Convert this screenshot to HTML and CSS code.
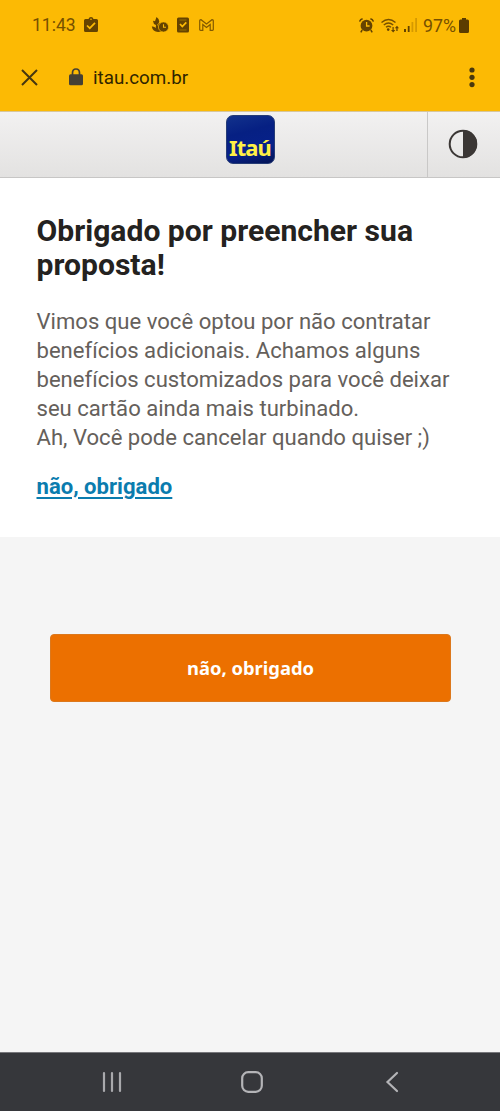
FILE: index.html
```html
<!DOCTYPE html>
<html lang="pt-BR">
<head>
<meta charset="utf-8">
<title>Itaú</title>
<link rel="stylesheet" href="styles.css">
</head>
<body>
<div class="screen">
  <div class="browser">
    <div class="status">
      <span class="clock">11:43</span>
      <svg class="ic-task" width="14" height="16" viewBox="0 0 14 16"><path d="M1.5 2H4.5Q5 0 7 0Q9 0 9.5 2H12.5Q14 2 14 3.500V13.500Q14 15 12.500 15H1.500Q0 15 0 13.500V3.500Q0 2 1.500 2Z" fill="#654300"/><path d="M3 8.500L5.800 11.200L11 5.800" fill="none" stroke="#fcba04" stroke-width="1.700"/><circle cx="7" cy="2.300" r=".8" fill="#fcba04"/></svg>
      <svg class="ic-plant" width="18" height="16" viewBox="0 0 18 16"><path d="M5.500 0Q9 2.500 8 5.500Q7.400 7 6.200 7.700V9Q7 6.800 9.500 5.800L10.500 14.500Q2 16.500 .8 9.500Q3.300 9 4.700 11L5 8Q1.800 7 2.200 3.800L4 4.300Z" fill="#654300"/><circle cx="12.500" cy="10" r="5.100" fill="#654300" stroke="#fcba04" stroke-width=".7"/><path d="M12.500 7.300V10.300H15" fill="none" stroke="#fcba04" stroke-width="1.100"/></svg>
      <svg class="ic-card" width="12" height="16" viewBox="0 0 12 16"><rect y=".5" width="12" height="15" rx="1.500" fill="#654300"/><path d="M2.500 3H9.500M2.500 13H9.500" stroke="#987000" stroke-width="1"/><path d="M3 7L5.300 9.500L9.300 5.300" fill="none" stroke="#fcba04" stroke-width="1.800"/></svg>
      <svg class="ic-mail" width="15" height="12" viewBox="0 0 15 12"><path d="M.7 10.600V2Q.7.600 2 .700L7.500 5L13 .700Q14.300.600 14.300 2V10.600Q14.300 11.300 13.500 11.300H11.200V5.500L7.500 8.400L3.800 5.500V11.300H1.500Q.7 11.300 .7 10.600Z" fill="none" stroke="#835a00" stroke-width="1.200"/></svg>
      <svg class="ic-alarm" width="15" height="15" viewBox="0 0 15 15"><path d="M.6 3.600Q1.300 1.500 3.600.800M14.400 3.600Q13.700 1.500 11.400.800M3.200 12L1.800 14.300M11.800 12L13.200 14.300" fill="none" stroke="#654300" stroke-width="1.500"/><circle cx="7.500" cy="7.700" r="5.900" fill="#654300"/><path d="M7.600 4V8H10.600" fill="none" stroke="#fcba04" stroke-width="1.300"/></svg>
      <svg class="ic-wifi" width="18" height="15" viewBox="0 0 18 15"><g fill="none" stroke="#765000" stroke-width="1.400"><path d="M.5 4.500Q7.500-1.500 14.500 4.500M2.800 7Q7.500 3 12.200 7M5 9.300Q7.500 7.300 10 9.300"/></g><circle cx="7.200" cy="11.600" r="1.300" fill="#654300"/><path d="M11.500 9V12H10L12.200 14.500L14.300 12H12.700V9ZM15.300 13V10.300H13.800L16 7.700L18 10.300H16.600V13Z" fill="#654300"/></svg>
      <svg class="ic-signal" width="13" height="14" viewBox="0 0 13 14"><path d="M0 11H2V14H0ZM3.800 8H5.600V14H3.800Z" fill="#654300"/><path d="M7.500 4H9.300V14H7.500ZM11.200 0H13V14H11.200Z" fill="#d59900"/></svg>
      <span class="percent">97%</span>
      <svg class="ic-batt" width="10" height="15" viewBox="0 0 10 15"><path d="M3 0H7V1.500H8.500Q10 1.500 10 3V13.500Q10 15 8.500 15H1.500Q0 15 0 13.500V3Q0 1.500 1.500 1.500H3Z" fill="#5b3c00"/></svg>
    </div>
    <div class="address">
      <svg class="ic-close" width="17" height="17" viewBox="0 0 17 17"><path d="M1 1L16 16M16 1L1 16" stroke="#47370f" stroke-width="2"/></svg>
      <svg class="ic-lock" width="14" height="18" viewBox="0 0 14 18"><path d="M3.500 8V5Q3.500 1 7 1Q10.500 1 10.500 5V8" fill="none" stroke="#454034" stroke-width="1.700"/><rect y="6.300" width="14" height="11" rx="1.500" fill="#454034"/></svg>
      <span class="url">itau.com.br</span>
      <svg class="ic-more" width="6" height="21" viewBox="0 0 6 21"><g fill="#49380e"><circle cx="3" cy="3" r="2.600"/><circle cx="3" cy="10.300" r="2.600"/><circle cx="3" cy="17.600" r="2.600"/></g></svg>
    </div>
  </div>
  <header class="header">
    <div class="brand"><div class="logo">Itaú</div></div>
    <div class="contrast"><svg width="30" height="30" viewBox="0 0 30 30"><circle cx="15" cy="15" r="13.300" fill="none" stroke="#3b3735" stroke-width="2"/><path d="M15 1A14 14 0 0 1 15 29Z" fill="#3b3735"/></svg></div>
  </header>
  <main class="message">
    <h1>Obrigado por preencher sua<br>proposta!</h1>
    <p>Vimos que você optou por não contratar<br>benefícios adicionais. Achamos alguns<br>benefícios customizados para você deixar<br>seu cartão ainda mais turbinado.<br>Ah, Você pode cancelar quando quiser ;)</p>
    <a class="decline" href="#">não, obrigado</a>
  </main>
  <section class="action"><button class="button">não, obrigado</button></section>
  <nav class="nav">
    <svg width="20" height="22" viewBox="0 0 20 22"><path d="M2 2V20M10 2V20M18 2V20" stroke="#a9a9ac" stroke-width="2.200" stroke-linecap="round"/></svg>
    <svg width="22" height="22" viewBox="0 0 22 22"><rect x="1.200" y="1.200" width="19.600" height="19.600" rx="6" fill="none" stroke="#b4b4b7" stroke-width="2.200"/></svg>
    <svg width="14" height="22" viewBox="0 0 14 22"><path d="M12 2L2.500 11L12 20" fill="none" stroke="#b4b4b7" stroke-width="2.200" stroke-linecap="round"/></svg>
  </nav>
</div>
</body>
</html>
```
FILE: styles.css
```css
* { box-sizing: border-box; }
body { margin: 0; font-family: Roboto, sans-serif; }
svg { display: block; flex: none; }
.screen { display: flex; flex-direction: column; width: 500px; height: 1111px; background: #f5f5f5; }
.browser { height: 111px; background: #fcba04; }
.status { display: flex; align-items: center; height: 50px; padding-left: 32px; color: #765000; font-size: 18px; white-space: nowrap; }
.clock { width: 52px; font-size: 17.500px; }
.ic-plant { margin-left: 53px; }
.ic-card { margin-left: 8px; }
.ic-mail { margin-left: 10px; }
.ic-alarm { margin-left: 145px; }
.ic-wifi { margin-left: 7px; }
.ic-signal { margin-left: 5px; }
.percent { width: 35px; margin-left: 6px; font-size: 17.800px; }
.ic-batt { margin-left: 1px; }
.address { display: flex; align-items: center; height: 54px; padding: 0 25px 0 21px; color: #302500; }
.ic-lock { margin-left: 31px; }
.url { margin-left: 10px; padding-top: 1px; font-size: 18.800px; }
.ic-more { margin-left: auto; }
.header { display: flex; height: 67px; background: linear-gradient(#f2f1f1, #e3e2e1); border-top: 1px solid #d7c69b; border-bottom: 1px solid #c7c6c5; }
.brand { width: 427px; padding: 3px 0 0 226px; }
.logo { width: 49px; height: 49px; padding: 14px 0 0 2px; border: 1px solid #263c76; border-radius: 7px; background: linear-gradient(165deg, #12328c, #062083 35%, #07218a 70%, #031353); color: #fff045; font: bold 22px/34px "Noto Sans", sans-serif; letter-spacing: -0.9px; }
.contrast { display: flex; flex: 1; align-items: center; justify-content: center; padding: 0 2px 2px 0; border-left: 1px solid #c9c8c7; }
.message { height: 359px; padding: 36px 36.500px 0; background: #fff; }
h1 { margin: 0; color: #242220; font-size: 30.100px; font-weight: 700; line-height: 34px; white-space: nowrap; }
p { margin: 25px 0 0; color: #65605b; font-size: 22.100px; line-height: 29px; white-space: nowrap; }
.decline { display: block; width: max-content; margin-top: 19px; color: #0b7cae; font-size: 22.100px; font-weight: 700; line-height: 30px; text-underline-offset: 3px; text-decoration-thickness: 2px; }
.action { flex: 1; padding: 97px 49px 0 50px; }
.button { display: block; width: 401px; height: 68px; padding: 0 0 2px; border: 1px solid #dc781c; border-radius: 4px; background: #ec7000; color: #fff; font: bold 18.400px "Noto Sans", sans-serif; }
.nav { display: flex; align-items: center; gap: 129px; height: 59px; padding: 0 0 1px 102px; border-top: 1px solid #77777b; background: #36373b; }
.nav svg:nth-child(2) { margin-left: -10px; }
.nav svg:nth-child(3) { margin-left: -7px; }
```
